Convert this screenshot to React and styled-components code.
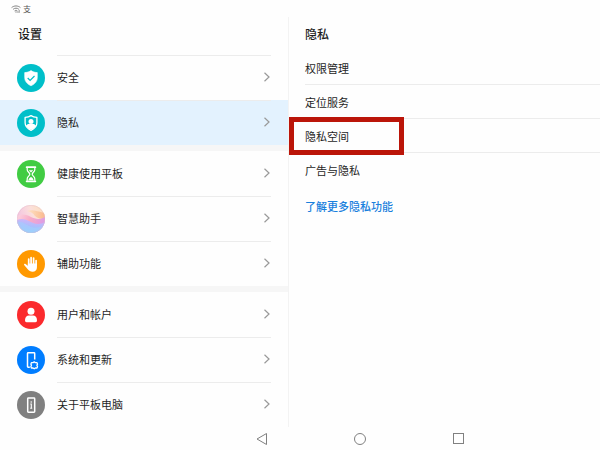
import React from 'react';
import styled, { createGlobalStyle } from 'styled-components';

const ShieldCheckIcon = () => (
  <svg width="28" height="28" viewBox="0 0 28 28" fill="none">
    <path d="M14 6.600c1.800 1.200 3.800 1.800 6.300 2v5c0 3.600-2.300 6.400-6.300 8.200-4-1.800-6.300-4.600-6.300-8.200v-5c2.500-.2 4.500-.8 6.300-2z" fill="#fff" stroke="#fff" strokeWidth=".6" strokeLinejoin="round" />
    <path d="M10.700 14l2.400 2.400 4.400-4.400" stroke="#00bfc9" strokeWidth="1.200" />
  </svg>
);

const ShieldUserIcon = () => (
  <svg width="28" height="28" viewBox="0 0 28 28" fill="none">
    <path d="M14 6.600c1.700 1.100 3.600 1.600 5.900 1.800v5.400c0 3.300-2.200 5.900-5.900 7.500-3.700-1.600-5.900-4.200-5.900-7.500V8.400c2.300-.2 4.200-.7 5.900-1.800z" stroke="#fff" strokeWidth="1.300" strokeLinejoin="round" />
    <circle cx="14" cy="12.400" r="2.500" fill="#fff" />
    <path d="M9 16.800c.6-1.200 1.700-1.700 3-1.700h4c1.300 0 2.400.5 3 1.700-.9 1.700-2.700 3-5 4-2.300-1-4.100-2.300-5-4z" fill="#fff" />
  </svg>
);

const HourglassIcon = () => (
  <svg width="28" height="28" viewBox="0 0 28 28" fill="none">
    <path d="M9.600 7.200h8.800M9.600 21.300h8.800" stroke="#fff" strokeWidth="1.700" strokeLinecap="round" />
    <path d="M10.200 8v1.700c0 2 2.600 3 2.600 4.500s-2.600 2.600-2.600 4.500v2M17.800 8v1.700c0 2-2.600 3-2.600 4.500s2.600 2.600 2.600 4.500v2" stroke="#fff" strokeWidth="1.200" />
    <path d="M11.800 10.200h4.400L14 12.600zM11.500 20.200c.2-1.600 1.200-2.500 2.500-3.200 1.300.7 2.300 1.600 2.500 3.200z" fill="#fff" />
  </svg>
);

const AssistantIcon = () => (
  <svg width="28" height="28" viewBox="0 0 28 28">
    <defs>
      <clipPath id="orb"><circle cx="14" cy="14" r="14" /></clipPath>
      <linearGradient id="orbTop" x1="0" y1=".4" x2="1" y2="0">
        <stop offset="0" stopColor="#f3c3e0" />
        <stop offset=".5" stopColor="#fbdfdc" />
        <stop offset="1" stopColor="#fde0b4" />
      </linearGradient>
      <linearGradient id="orbWarm" x1="0" y1="0" x2="1" y2="0">
        <stop offset="0" stopColor="#fde3c8" />
        <stop offset="1" stopColor="#fbb98c" />
      </linearGradient>
      <linearGradient id="orbMiddle" x1="0" y1="0" x2="1" y2=".3">
        <stop offset="0" stopColor="#fbd5e2" />
        <stop offset=".5" stopColor="#f8abc6" />
        <stop offset="1" stopColor="#dd9ce6" />
      </linearGradient>
      <linearGradient id="orbBottom" x1=".6" y1="0" x2=".4" y2="1">
        <stop offset="0" stopColor="#d3b4f8" />
        <stop offset=".5" stopColor="#aebdfc" />
        <stop offset="1" stopColor="#86d8fb" />
      </linearGradient>
    </defs>
    <g clipPath="url(#orb)">
      <path d="M0 0h28v28H0z" fill="url(#orbTop)" />
      <path d="M10 6c5-2 9 0 18 2v6c-5 0-8-1-10-3-2-3-4-4-8-5z" fill="url(#orbWarm)" />
      <path d="M0 11c6-3 10-1 14 1s9 3 14 0v16H0z" fill="url(#orbMiddle)" />
      <path d="M0 15c5-2 8-1 12 1s9 5 16 1v11H0z" fill="url(#orbBottom)" />
      <path d="M0 17c6-1 9 3 14 5 4 1 8 1 14-2v8H0z" fill="#a5cdfd" opacity=".6" />
    </g>
    <circle cx="14" cy="14" r="13.700" fill="none" stroke="#d9b9c9" strokeWidth=".6" opacity=".5" />
  </svg>
);

const HandIcon = () => (
  <svg width="28" height="28" viewBox="0 0 28 28" fill="none">
    <path d="M11.700 15V9M14.100 14V7.600M16.600 14V8.100M19.100 15v-4.500" stroke="#fff" strokeWidth="1.700" strokeLinecap="round" />
    <path d="M10.850 13.400h9.100v3.900c0 2.800-1.700 4.500-4.400 4.500-2.200 0-3.500-.9-4.800-2.500l-3.600-4.300c-.5-.7.5-1.700 1.400-1.100l2.300 1.800z" fill="#fff" />
  </svg>
);

const UserIcon = () => (
  <svg width="28" height="28" viewBox="0 0 28 28" fill="#fff">
    <circle cx="14" cy="10.300" r="3.500" />
    <path d="M8 19.300c0-3 1.600-4.700 4-4.700h4c2.400 0 4 1.700 4 4.700 0 1.200-.5 2-1.600 2H9.600c-1.100 0-1.600-.8-1.600-2z" />
  </svg>
);

const TabletGearIcon = () => (
  <svg width="28" height="28" viewBox="0 0 28 28" fill="none">
    <path d="M17.700 13.500V7.400c0-.4-.3-.7-.7-.7h-5.800c-.4 0-.7.3-.7.700v13.200c0 .4.300.7.700.7h1.600" stroke="#fff" strokeWidth="1.500" />
    <path d="M17.200 15.800l1.200.9 1.600-.1.500 1.500-.6 1.200.6 1.300-.5 1.400-1.600-.1-1.200.9-1.200-.9-1.600.1-.5-1.400.6-1.300-.6-1.200.5-1.500 1.600.1z" stroke="#fff" strokeWidth="1.300" strokeLinejoin="round" />
  </svg>
);

const TabletInfoIcon = () => (
  <svg width="28" height="28" viewBox="0 0 28 28" fill="none">
    <rect x="10.700" y="7" width="7" height="14.300" rx=".7" stroke="#fff" strokeWidth="1.500" />
    <path d="M14.200 10.200v1.500M13.300 13h1v4.300M13.200 17.300h2" stroke="#fff" strokeWidth="1.100" />
  </svg>
);

const Chevron = () => (
  <svg width="8" height="10" viewBox="0 0 8 10" fill="none" stroke="#999" strokeWidth="1.200">
    <path d="M1.500 .8L6 5 1.500 9.200" />
  </svg>
);

const WifiIcon = () => (
  <svg width="10" height="8" viewBox="0 0 10 8" fill="none" stroke="#777">
    <path d="M.6 2.600c2.500-2.200 6.300-2.200 8.800 0M2.100 4.300c1.700-1.500 4.100-1.500 5.800 0M3.600 5.900c.8-.7 2-.7 2.800 0" strokeWidth=".9" />
    <path d="M5 6.200v1.600M8.200 4.800v3M6.900 6.400v1.400" strokeWidth=".8" />
  </svg>
);

const groups = [
  [
    { title: '安全', color: '#00bfc9', icon: ShieldCheckIcon },
    { title: '隐私', color: '#00bfc9', icon: ShieldUserIcon, active: true },
  ],
  [
    { title: '健康使用平板', color: '#41cc43', icon: HourglassIcon },
    { title: '智慧助手', color: '#f6d5e4', icon: AssistantIcon },
    { title: '辅助功能', color: '#ff9900', icon: HandIcon },
  ],
  [
    { title: '用户和帐户', color: '#fb2a2d', icon: UserIcon },
    { title: '系统和更新', color: '#007dff', icon: TabletGearIcon },
    { title: '关于平板电脑', color: '#808080', icon: TabletInfoIcon },
  ],
];

const privacyItems = [
  { title: '权限管理' },
  { title: '定位服务' },
  { title: '隐私空间', marked: true },
  { title: '广告与隐私' },
];

const SettingsGroup = ({ items }) => (
  <Group>
    {items.map(({ title, color, icon: Icon, active }) => (
      <SettingsRow key={title} $active={active} aria-current={active ? 'page' : undefined}>
        <Badge $color={color}><Icon /></Badge>
        <RowBody>
          <span>{title}</span>
          <Chevron />
        </RowBody>
      </SettingsRow>
    ))}
  </Group>
);

export default function App() {
  return (
    <Page>
      <GlobalStyle />
      <StatusBar>
        <WifiIcon />
        <span>支</span>
      </StatusBar>
      <Columns>
        <Sidebar>
          <SidebarTitle>设置</SidebarTitle>
          {groups.map(items => <SettingsGroup key={items[0].title} items={items} />)}
        </Sidebar>
        <Detail>
          <DetailTitle>隐私</DetailTitle>
          {privacyItems.map(({ title, marked }) => (
            <DetailRow key={title}>
              {title}
              {marked && <Marker />}
            </DetailRow>
          ))}
          <MoreLink href="#more">了解更多隐私功能</MoreLink>
        </Detail>
      </Columns>
      <SystemNav>
        <NavButton aria-label="返回">
          <svg width="14" height="14" viewBox="0 0 14 14" fill="none" stroke="#808080">
            <path d="M11.500 1.500v11L2 7z" strokeLinejoin="round" />
          </svg>
        </NavButton>
        <NavButton aria-label="主屏幕">
          <svg width="14" height="14" viewBox="0 0 14 14" fill="none" stroke="#808080">
            <circle cx="7" cy="7" r="5.500" />
          </svg>
        </NavButton>
        <NavButton aria-label="最近任务">
          <svg width="14" height="14" viewBox="0 0 14 14" fill="none" stroke="#808080">
            <rect x="2.500" y="1.500" width="10" height="10" />
          </svg>
        </NavButton>
      </SystemNav>
    </Page>
  );
}

const GlobalStyle = createGlobalStyle`
  * {
    box-sizing: border-box;
  }

  body {
    margin: 0;
    background: #fefefe;
    color: #1f1f1f;
    font-family: "Noto Sans CJK SC", sans-serif;
    font-size: 11px;
    line-height: 16px;
  }

  button {
    margin: 0;
    padding: 0;
    border: 0;
    background: none;
    color: inherit;
    font: inherit;
    text-align: left;
    cursor: pointer;
  }

  svg {
    display: block;
    flex: none;
  }
`;

const Page = styled.div`
  display: flex;
  flex-direction: column;
  min-height: 100vh;
`;

const StatusBar = styled.header`
  display: flex;
  align-items: center;
  gap: 2px;
  height: 17px;
  padding-left: 11px;
  color: #555;
  font-size: 8px;
`;

const Columns = styled.main`
  display: flex;
  flex: 1;
`;

const Sidebar = styled.nav`
  width: 48%;
`;

const Title = styled.h1`
  margin: 0;
  font-size: 12px;
  font-weight: 500;
  line-height: 16px;
`;

const SidebarTitle = styled(Title)`
  padding: 9px 18px 13px;
`;

const Group = styled.div`
  & + & {
    border-top: 6px solid #f6f6f6;
  }
`;

const RowBody = styled.span`
  display: flex;
  flex: 1;
  align-items: center;
  justify-content: space-between;
  height: 45px;
  padding-bottom: 2px;
  border-top: 1px solid #ececec;
`;

const SettingsRow = styled.button`
  display: flex;
  align-items: center;
  gap: 12px;
  width: 100%;
  padding: 0 17px;
  background: ${({ $active }) => ($active ? '#e3f2fe' : 'transparent')};

  ${Group} + ${Group} &:first-child ${RowBody} {
    border-top-color: transparent;
  }
`;

const Badge = styled.span`
  width: 28px;
  height: 28px;
  border-radius: 50%;
  background: ${({ $color }) => $color};
`;

const Detail = styled.section`
  flex: 1;
  padding-left: 16px;
  border-left: 1px solid #f3f3f3;
`;

const DetailTitle = styled(Title)`
  padding: 9px 0;
`;

const DetailRow = styled.button`
  position: relative;
  display: block;
  width: 100%;
  height: 34px;
  border-bottom: 1px solid #ececec;

  &:last-of-type {
    border-bottom-color: transparent;
  }
`;

/* callout frame drawn over the row */
const Marker = styled.span`
  position: absolute;
  top: -2px;
  left: -16px;
  width: 115px;
  height: 38px;
  border: 5px solid #bb1509;
  z-index: 1;
`;

const MoreLink = styled.a`
  display: inline-block;
  margin-top: 11px;
  color: #1a80dd;
  font-weight: 500;
  text-decoration: none;
`;

const SystemNav = styled.footer`
  display: flex;
  align-items: center;
  justify-content: center;
  gap: 84px;
  height: 24px;
  padding-left: 20%;
`;

const NavButton = styled.button`
  width: 14px;
  height: 14px;
`;
